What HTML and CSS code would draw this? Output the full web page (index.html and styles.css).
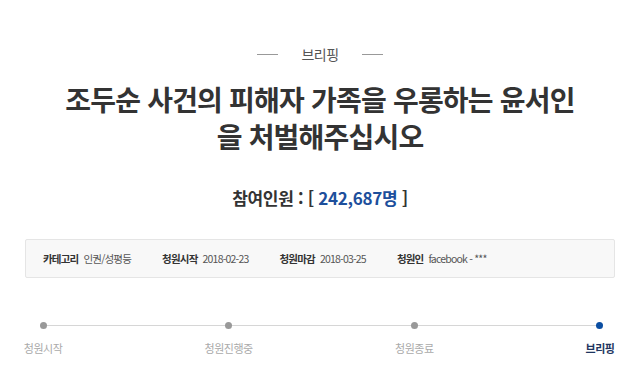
FILE: index.html
```html
<!DOCTYPE html>
<html lang="ko">
<head>
    <meta charset="UTF-8">
    <meta name="viewport" content="width=device-width, initial-scale=1.0">
    <title>청원 브리핑</title>
    <link rel="stylesheet" href="styles.css">
</head>
<body>

    <div class="petition">

        <!-- Section heading -->
        <div class="brief-head">
            <span class="brief-line"></span>
            <span class="brief-text">브리핑</span>
            <span class="brief-line"></span>
        </div>

        <h1 class="petition-title">조두순 사건의 피해자 가족을 우롱하는 윤서인<br>을 처벌해주십시오</h1>

        <p class="petition-count">참여인원 : [ <span class="count-num">242,687명</span> ]</p>

        <!-- Petition info -->
        <ul class="petition-info">
            <li><strong>카테고리</strong><span>인권/성평등</span></li>
            <li><strong>청원시작</strong><span>2018-02-23</span></li>
            <li><strong>청원마감</strong><span>2018-03-25</span></li>
            <li><strong>청원인</strong><span>facebook - ***</span></li>
        </ul>

        <!-- Progress -->
        <ol class="steps">
            <li class="step"><span class="dot"></span><span class="step-label">청원시작</span></li>
            <li class="step"><span class="dot"></span><span class="step-label">청원진행중</span></li>
            <li class="step"><span class="dot"></span><span class="step-label">청원종료</span></li>
            <li class="step current"><span class="dot"></span><span class="step-label">브리핑</span></li>
        </ol>

    </div>

</body>
</html>
```

FILE: styles.css
```css
/* General page styling */
body {
    margin: 0;
    background-color: #fff;
    color: #333;
    font-family: "Noto Sans CJK KR", "Noto Sans", sans-serif;
}

.petition {
    width: 640px;
    text-align: center;
}

/* Heading with lines */
.brief-head {
    display: flex;
    justify-content: center;
    align-items: center;
    gap: 23px;
    padding-top: 44px;
    height: 20px;
}

.brief-line {
    width: 21px;
    height: 1px;
    background-color: #999;
}

.brief-text {
    font-size: 14px;
    line-height: 20px;
    letter-spacing: -0.5px;
    color: #555;
}

.petition-title {
    margin: 17px 0 0;
    font-size: 28px;
    line-height: 37px;
    font-weight: bold;
    letter-spacing: -0.8px;
    color: #333;
}

.petition-count {
    margin: 31px 0 0;
    font-size: 17px;
    line-height: 24px;
    font-weight: bold;
    letter-spacing: -0.3px;
    color: #333;
}

.count-num {
    color: #1d4f9c;
}

/* Info box */
.petition-info {
    display: flex;
    gap: 31px;
    list-style: none;
    margin: 29px 25px 0 25px;
    padding: 0 17px;
    height: 37px;
    line-height: 37px;
    background-color: #f8f8f8;
    border: 1px solid #e5e5e5;
    border-radius: 2px;
    font-size: 10.5px;
    letter-spacing: -0.8px;
    text-align: left;
}

.petition-info strong {
    color: #333;
    margin-right: 5px;
}

.petition-info span {
    color: #555;
}

/* Progress steps */
.steps {
    display: flex;
    justify-content: space-between;
    list-style: none;
    margin: 44px 40px 0 43px;
    padding: 0;
    background: linear-gradient(#d6d6d6, #d6d6d6) no-repeat 0 3px / 100% 1px;
}

.step {
    width: 0;
    display: flex;
    flex-direction: column;
    align-items: center;
}

.dot {
    width: 7px;
    height: 7px;
    flex-shrink: 0;
    border-radius: 50%;
    background-color: #999;
}

.step-label {
    margin-top: 11px;
    font-size: 11px;
    line-height: 16px;
    letter-spacing: -0.5px;
    white-space: nowrap;
    color: #aaa;
}

.step.current .dot {
    background-color: #0b4ea2;
}

.step.current .step-label {
    font-weight: bold;
    color: #1e3560;
}
```
